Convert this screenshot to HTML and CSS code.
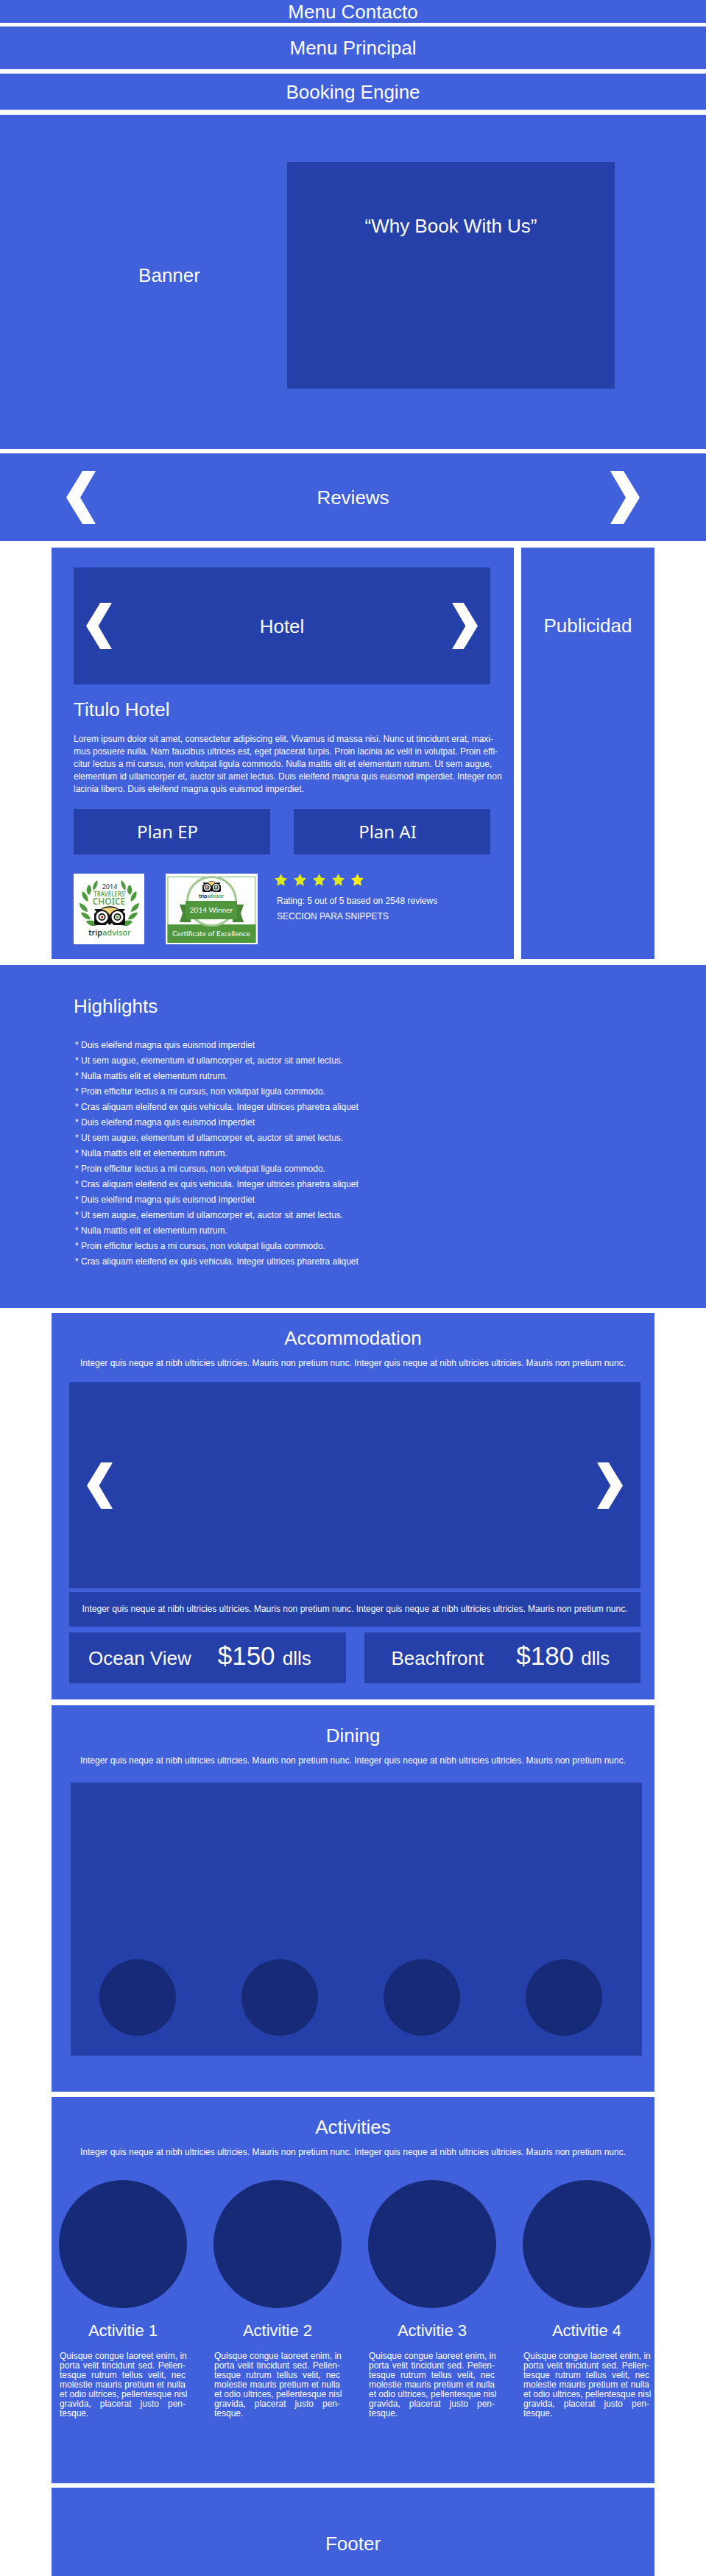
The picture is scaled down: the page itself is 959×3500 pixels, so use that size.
FILE: index.html
```html
<!DOCTYPE html>
<html lang="es">
<head>
<meta charset="utf-8">
<meta name="viewport" content="width=device-width, initial-scale=1">
<title>Hotel</title>
<link rel="stylesheet" href="styles.css">
</head>
<body>
<svg class="sprite" aria-hidden="true">
  <symbol id="prev" viewBox="0 0 40 72"><path d="M22 0H40L19 36L40 72H22L0 36Z"/></symbol>
  <symbol id="next" viewBox="0 0 40 72"><path d="M18 0H0L21 36L0 72H18L40 36Z"/></symbol>
  <symbol id="star" viewBox="0 0 17 17"><path d="M8.500 0L11.200 5.500L17 6.300L12.800 10.500L13.800 16.700L8.500 13.800L3.200 16.700L4.200 10.500L0 6.300L5.800 5.500Z"/></symbol>
  <symbol id="owl" viewBox="0 0 42 26">
    <path d="M0 4H9C16 -1 26 -1 33 4H42L39 8A11 11 0 1 1 24 23L21 26L18 23A11 11 0 1 1 3 8Z" fill="#111"/>
    <path d="M9 4.500C16 1 26 1 33 4.500C27 5 22 9 21 13C20 9 15 5 9 4.500Z" fill="#f5d67b"/>
    <circle cx="10.500" cy="15" r="8" fill="#fff"/><circle cx="31.500" cy="15" r="8" fill="#fff"/>
    <circle cx="10.500" cy="15" r="5" fill="#111"/><circle cx="31.500" cy="15" r="5" fill="#111"/>
    <circle cx="10.500" cy="15" r="3.300" fill="#fff"/><circle cx="31.500" cy="15" r="3.300" fill="#fff"/>
    <circle cx="10.500" cy="15" r="1.800" fill="#d22"/><circle cx="31.500" cy="15" r="1.800" fill="#3f9b35"/>
  </symbol>
  <symbol id="laurel" viewBox="0 0 28 66" overflow="visible">
    <g fill="#4b9b3c">
      <path d="M24 0C26 6 22 11 19 14C17 9 19 4 24 0Z"/>
      <path d="M13 6C17 9 17 16 13 20C8 16 9 10 13 6Z"/>
      <path d="M4 15C9 17 13 24 11 29C6 27 2 21 4 15Z"/>
      <path d="M0 31C6 32 11 37 11 43C5 42 0 38 0 31Z"/>
      <path d="M2 44C8 43 14 48 15 53C9 54 4 50 2 44Z"/>
      <path d="M9 56C15 53 21 55 25 60C20 64 12 62 9 56Z"/>
    </g>
  </symbol>
</svg>

<header>
  <div class="bar bar-contact"><h2 class="title">Menu Contacto</h2></div>
  <nav class="bar bar-main"><h2 class="title">Menu Principal</h2></nav>
  <div class="bar bar-booking"><h2 class="title">Booking Engine</h2></div>
</header>

<main>
  <section class="banner">
    <h2 class="title banner-label">Banner</h2>
    <div class="why"><h2 class="title">“Why Book With Us”</h2></div>
  </section>

  <section class="reviews">
    <button class="arrow arrow-large" type="button" aria-label="Previous review"><svg><use href="#prev"/></svg></button>
    <h2 class="title">Reviews</h2>
    <button class="arrow arrow-large" type="button" aria-label="Next review"><svg><use href="#next"/></svg></button>
  </section>

  <div class="hotel-row">
    <section class="hotel">
      <div class="slider">
        <button class="arrow" type="button" aria-label="Previous photo"><svg><use href="#prev"/></svg></button>
        <h2 class="title">Hotel</h2>
        <button class="arrow" type="button" aria-label="Next photo"><svg><use href="#next"/></svg></button>
      </div>
      <h1 class="title hotel-title">Titulo Hotel</h1>
      <p class="hotel-text justified">
        <span>Lorem ipsum dolor sit amet, consectetur adipiscing elit. Vivamus id massa nisi. Nunc ut tincidunt erat, maxi-</span>
        <span>mus posuere nulla. Nam faucibus ultrices est, eget placerat turpis. Proin lacinia ac velit in volutpat. Proin effi-</span>
        <span>citur lectus a mi cursus, non volutpat ligula commodo. Nulla mattis elit et elementum rutrum. Ut sem augue,</span>
        <span>elementum id ullamcorper et, auctor sit amet lectus. Duis eleifend magna quis euismod imperdiet. Integer non</span>
        <span>lacinia libero. Duis eleifend magna quis euismod imperdiet.</span>
      </p>
      <div class="plans">
        <button class="plan" type="button">Plan EP</button>
        <button class="plan" type="button">Plan AI</button>
      </div>
      <div class="awards">
        <svg class="badge-choice" viewBox="0 0 96 96" role="img" aria-label="2014 Travelers' Choice">
          <rect width="96" height="96" fill="#fff"/>
          <use href="#laurel" x="8" y="9" width="28" height="66"/>
          <g transform="translate(97 0) scale(-1 1)"><use href="#laurel" x="8" y="9" width="28" height="66"/></g>
          <text x="49" y="21" class="badge-year">2014</text>
          <text x="49" y="31" class="badge-travelers">TRAVELERS’</text>
          <text x="48" y="42" class="badge-word">CHOICE</text>
          <use href="#owl" x="28" y="44" width="42" height="26"/>
          <text x="49" y="84" class="badge-brand"><tspan fill="#111">trip</tspan>advisor</text>
        </svg>
        <svg class="badge-winner" viewBox="0 0 125 96" role="img" aria-label="2014 Winner, Certificate of Excellence">
          <rect width="125" height="96" fill="#fff"/>
          <rect x="3" y="4.500" width="119" height="88" fill="none" stroke="#7db56b"/>
          <rect x="2.500" y="69" width="120" height="25" fill="#50963c"/>
          <circle cx="62.500" cy="37.500" r="33" fill="#fff" stroke="#9cca8d" stroke-width="3"/>
          <path d="M19 42H34V66H19L23 54Z M106 42H91V66H106L102 54Z" fill="#468635"/>
          <path d="M27 37H97V62H27Z" fill="#50963c"/>
          <use href="#owl" x="50" y="10" width="25" height="15"/>
          <text x="62" y="33" class="badge-brand-small"><tspan fill="#111">trip</tspan>advisor</text>
          <text x="62" y="53" class="badge-ribbon">2014 Winner</text>
          <text x="62" y="85" class="badge-certificate">Certificate of Excellence</text>
        </svg>
        <div class="snippet">
          <div class="stars" role="img" aria-label="5 stars">
            <svg><use href="#star"/></svg><svg><use href="#star"/></svg><svg><use href="#star"/></svg><svg><use href="#star"/></svg><svg class="star-bright"><use href="#star"/></svg>
          </div>
          <p>Rating: 5 out of 5 based on 2548 reviews</p>
          <p>SECCION PARA SNIPPETS</p>
        </div>
      </div>
    </section>
    <aside class="ads"><h2 class="title">Publicidad</h2></aside>
  </div>

  <section class="highlights">
    <h2 class="title">Highlights</h2>
    <ul class="highlight-list">
      <li>* Duis eleifend magna quis euismod imperdiet</li>
      <li>* Ut sem augue, elementum id ullamcorper et, auctor sit amet lectus.</li>
      <li>* Nulla mattis elit et elementum rutrum.</li>
      <li>* Proin efficitur lectus a mi cursus, non volutpat ligula commodo.</li>
      <li>* Cras aliquam eleifend ex quis vehicula. Integer ultrices pharetra aliquet</li>
      <li>* Duis eleifend magna quis euismod imperdiet</li>
      <li>* Ut sem augue, elementum id ullamcorper et, auctor sit amet lectus.</li>
      <li>* Nulla mattis elit et elementum rutrum.</li>
      <li>* Proin efficitur lectus a mi cursus, non volutpat ligula commodo.</li>
      <li>* Cras aliquam eleifend ex quis vehicula. Integer ultrices pharetra aliquet</li>
      <li>* Duis eleifend magna quis euismod imperdiet</li>
      <li>* Ut sem augue, elementum id ullamcorper et, auctor sit amet lectus.</li>
      <li>* Nulla mattis elit et elementum rutrum.</li>
      <li>* Proin efficitur lectus a mi cursus, non volutpat ligula commodo.</li>
      <li>* Cras aliquam eleifend ex quis vehicula. Integer ultrices pharetra aliquet</li>
    </ul>
  </section>

  <section class="card accommodation">
    <h2 class="title">Accommodation</h2>
    <p class="intro">Integer quis neque at nibh ultricies ultricies. Mauris non pretium nunc. Integer quis neque at nibh ultricies ultricies. Mauris non pretium nunc.</p>
    <div class="rooms">
      <div class="room-slider">
        <button class="arrow" type="button" aria-label="Previous room"><svg><use href="#prev"/></svg></button>
        <button class="arrow" type="button" aria-label="Next room"><svg><use href="#next"/></svg></button>
      </div>
      <p class="room-caption">Integer quis neque at nibh ultricies ultricies. Mauris non pretium nunc. Integer quis neque at nibh ultricies ultricies. Mauris non pretium nunc.</p>
      <div class="prices">
        <div class="price price-ocean"><span>Ocean View</span><span><strong class="amount">$150</strong> dlls</span></div>
        <div class="price price-beach"><span>Beachfront</span><span><strong class="amount">$180</strong> dlls</span></div>
      </div>
    </div>
  </section>

  <section class="card dining">
    <h2 class="title">Dining</h2>
    <p class="intro">Integer quis neque at nibh ultricies ultricies. Mauris non pretium nunc. Integer quis neque at nibh ultricies ultricies. Mauris non pretium nunc.</p>
    <div class="dining-photo">
      <div class="dot"></div><div class="dot"></div><div class="dot"></div><div class="dot"></div>
    </div>
  </section>

  <section class="card activities">
    <h2 class="title">Activities</h2>
    <p class="intro">Integer quis neque at nibh ultricies ultricies. Mauris non pretium nunc. Integer quis neque at nibh ultricies ultricies. Mauris non pretium nunc.</p>
    <div class="activity-grid">
      <article>
        <div class="activity-photo"></div>
        <h3 class="activity-title">Activitie 1</h3>
        <p class="activity-text justified">
          <span>Quisque congue laoreet enim, in</span>
          <span>porta velit tincidunt sed. Pellen-</span>
          <span>tesque rutrum tellus velit, nec</span>
          <span>molestie mauris pretium et nulla</span>
          <span>et odio ultrices, pellentesque nisl</span>
          <span>gravida, placerat justo pen-</span>
          <span>tesque.</span>
        </p>
      </article>
      <article>
        <div class="activity-photo"></div>
        <h3 class="activity-title">Activitie 2</h3>
        <p class="activity-text justified">
          <span>Quisque congue laoreet enim, in</span>
          <span>porta velit tincidunt sed. Pellen-</span>
          <span>tesque rutrum tellus velit, nec</span>
          <span>molestie mauris pretium et nulla</span>
          <span>et odio ultrices, pellentesque nisl</span>
          <span>gravida, placerat justo pen-</span>
          <span>tesque.</span>
        </p>
      </article>
      <article>
        <div class="activity-photo"></div>
        <h3 class="activity-title">Activitie 3</h3>
        <p class="activity-text justified">
          <span>Quisque congue laoreet enim, in</span>
          <span>porta velit tincidunt sed. Pellen-</span>
          <span>tesque rutrum tellus velit, nec</span>
          <span>molestie mauris pretium et nulla</span>
          <span>et odio ultrices, pellentesque nisl</span>
          <span>gravida, placerat justo pen-</span>
          <span>tesque.</span>
        </p>
      </article>
      <article>
        <div class="activity-photo"></div>
        <h3 class="activity-title">Activitie 4</h3>
        <p class="activity-text justified">
          <span>Quisque congue laoreet enim, in</span>
          <span>porta velit tincidunt sed. Pellen-</span>
          <span>tesque rutrum tellus velit, nec</span>
          <span>molestie mauris pretium et nulla</span>
          <span>et odio ultrices, pellentesque nisl</span>
          <span>gravida, placerat justo pen-</span>
          <span>tesque.</span>
        </p>
      </article>
    </div>
  </section>
</main>

<footer class="footer"><h2 class="title">Footer</h2></footer>
</body>
</html>
```

FILE: styles.css
```css
:root {
  --blue: #4160db;
  --dark: #2540a8;
  --navy: #172a77;
}

* { box-sizing: border-box; }

body {
  margin: 0;
  background: #fff;
  color: #fff;
  font: 12px/17px "Liberation Sans", Arial, sans-serif;
}

h1, h2, h3, p, ul { margin: 0; padding: 0; }
ul { list-style: none; }
button { border: 0; padding: 0; background: none; color: inherit; cursor: pointer; }
.sprite { display: block; width: 0; height: 0; }

.title {
  font-size: 26px;
  line-height: 30px;
  font-weight: 400;
}

/* Paragraphs with set line breaks, spread to both edges */
.justified span {
  display: block;
  white-space: nowrap;
  text-align: justify;
  text-align-last: justify;
}
.justified span:last-child { text-align-last: left; }

/* Top bars */
.bar {
  display: flex;
  align-items: center;
  justify-content: center;
  background: var(--blue);
}
.bar-contact { height: 31px; }
.bar-main { height: 58px; margin-top: 5px; }
.bar-booking { height: 49px; margin-top: 6px; }

/* Banner */
.banner {
  display: grid;
  grid-template-columns: 320fr 445fr;
  align-items: center;
  margin-top: 7px;
  padding: 64px 124px 82px 70px;
  background: var(--blue);
  text-align: center;
}
.why {
  min-height: 308px;
  padding-top: 72px;
  background: var(--dark);
}

/* Carousels */
.arrow { width: 35px; height: 65px; }
.arrow svg { display: block; width: 100%; height: 100%; fill: #fff; }
.arrow-large { width: 40px; height: 72px; }

.reviews {
  display: flex;
  align-items: center;
  justify-content: space-between;
  min-height: 119px;
  margin-top: 6px;
  padding: 0 90px;
  background: var(--blue);
}

/* Hotel */
.hotel-row {
  display: grid;
  grid-template-columns: minmax(0, 628fr) minmax(0, 181fr);
  gap: 10px;
  margin: 9px 70px 0;
}
.hotel {
  padding: 27px 32px 20px 30px;
  background: var(--blue);
}
.slider {
  display: flex;
  align-items: center;
  justify-content: space-between;
  min-height: 159px;
  padding: 0 17px;
  background: var(--dark);
}
.hotel-title { margin-top: 19px; }
.hotel-text { margin-top: 17px; }
.plans {
  display: grid;
  grid-template-columns: 1fr 1fr;
  gap: 32px;
  margin-top: 18px;
}
.plan {
  height: 62px;
  padding-right: 12px;
  background: var(--dark);
  font: 24px/30px "Noto Sans", "Open Sans", sans-serif;
}
.awards { display: flex; margin-top: 26px; }
.badge-choice { width: 96px; height: 96px; margin-right: 29px; }
.badge-winner { width: 125px; height: 96px; margin-right: 23px; }
.badge-choice text, .badge-winner text { text-anchor: middle; fill: #4b9b3c; }
.badge-choice text { font-family: "Noto Sans", sans-serif; }
.badge-winner text { font-family: Lato, sans-serif; }
.badge-choice .badge-year { font-size: 9px; fill: #333; }
.badge-choice .badge-travelers { font-size: 8px; font-weight: 500; }
.badge-choice .badge-word { font-size: 12px; font-weight: 500; }
.badge-choice .badge-brand { font-size: 11px; font-weight: 500; }
.badge-winner .badge-brand-small { font-size: 7px; font-weight: 700; }
.badge-winner .badge-ribbon { font-size: 10px; fill: #fff; }
.badge-winner .badge-certificate { font-size: 10px; fill: #fff; }
.snippet { line-height: 21px; }
.snippet p { padding-left: 3px; }
.stars { display: flex; gap: 9px; margin-bottom: 10px; }
.stars svg { width: 17px; height: 17px; fill: #dfe81a; }
.stars .star-bright { fill: #fff200; }
.ads {
  padding-top: 91px;
  background: var(--blue);
  text-align: center;
}

/* Highlights */
.highlights {
  margin-top: 8px;
  padding: 41px 100px 52px;
  background: var(--blue);
}
.highlight-list { margin-top: 28px; padding-left: 2px; line-height: 21px; }

/* Cards */
.card {
  margin: 7px 70px 0;
  background: var(--blue);
  text-align: center;
}
.intro { margin-top: 11px; }

.accommodation { padding: 19px 0 22px; }
.rooms { margin: 17px 19px 0 24px; }
.room-slider {
  display: flex;
  align-items: center;
  justify-content: space-between;
  min-height: 280px;
  padding: 0 24px;
  background: var(--dark);
}
.room-caption { margin-top: 5px; padding: 15px 0; background: var(--dark); }
.prices {
  display: grid;
  grid-template-columns: 1fr 1fr;
  gap: 25px;
  margin-top: 8px;
}
.price {
  display: flex;
  align-items: baseline;
  min-height: 69px;
  padding-top: 12px;
  background: var(--dark);
  font-size: 26px;
  line-height: 40px;
}
.price-ocean { gap: 36px; padding-left: 26px; }
.price-beach { gap: 44px; padding-left: 37px; }
.amount { margin-right: 3px; font-size: 35px; font-weight: 400; }

.dining { margin-top: 8px; padding: 26px 0 49px; }
.dining-photo {
  display: flex;
  align-items: flex-end;
  justify-content: space-between;
  min-height: 371px;
  margin: 21px 17px 0 26px;
  padding: 0 54px 27px 39px;
  background: var(--dark);
}
.dot { width: 104px; height: 104px; border-radius: 50%; background: var(--navy); }

.activities { padding: 26px 0 88px; }
.activity-grid {
  display: grid;
  grid-template-columns: repeat(4, minmax(0, 1fr));
  gap: 36px;
  margin: 29px 5px 0 10px;
}
.activity-photo { aspect-ratio: 1; border-radius: 50%; background: var(--navy); }
.activity-title {
  margin-top: 18px;
  font-size: 22px;
  line-height: 26px;
  font-weight: 400;
}
.activity-text {
  margin-top: 15px;
  padding: 0 2px 0 1px;
  line-height: 13px;
}

.footer {
  margin: 6px 70px 0;
  padding: 61px 0 29px;
  background: var(--blue);
  text-align: center;
}
```
